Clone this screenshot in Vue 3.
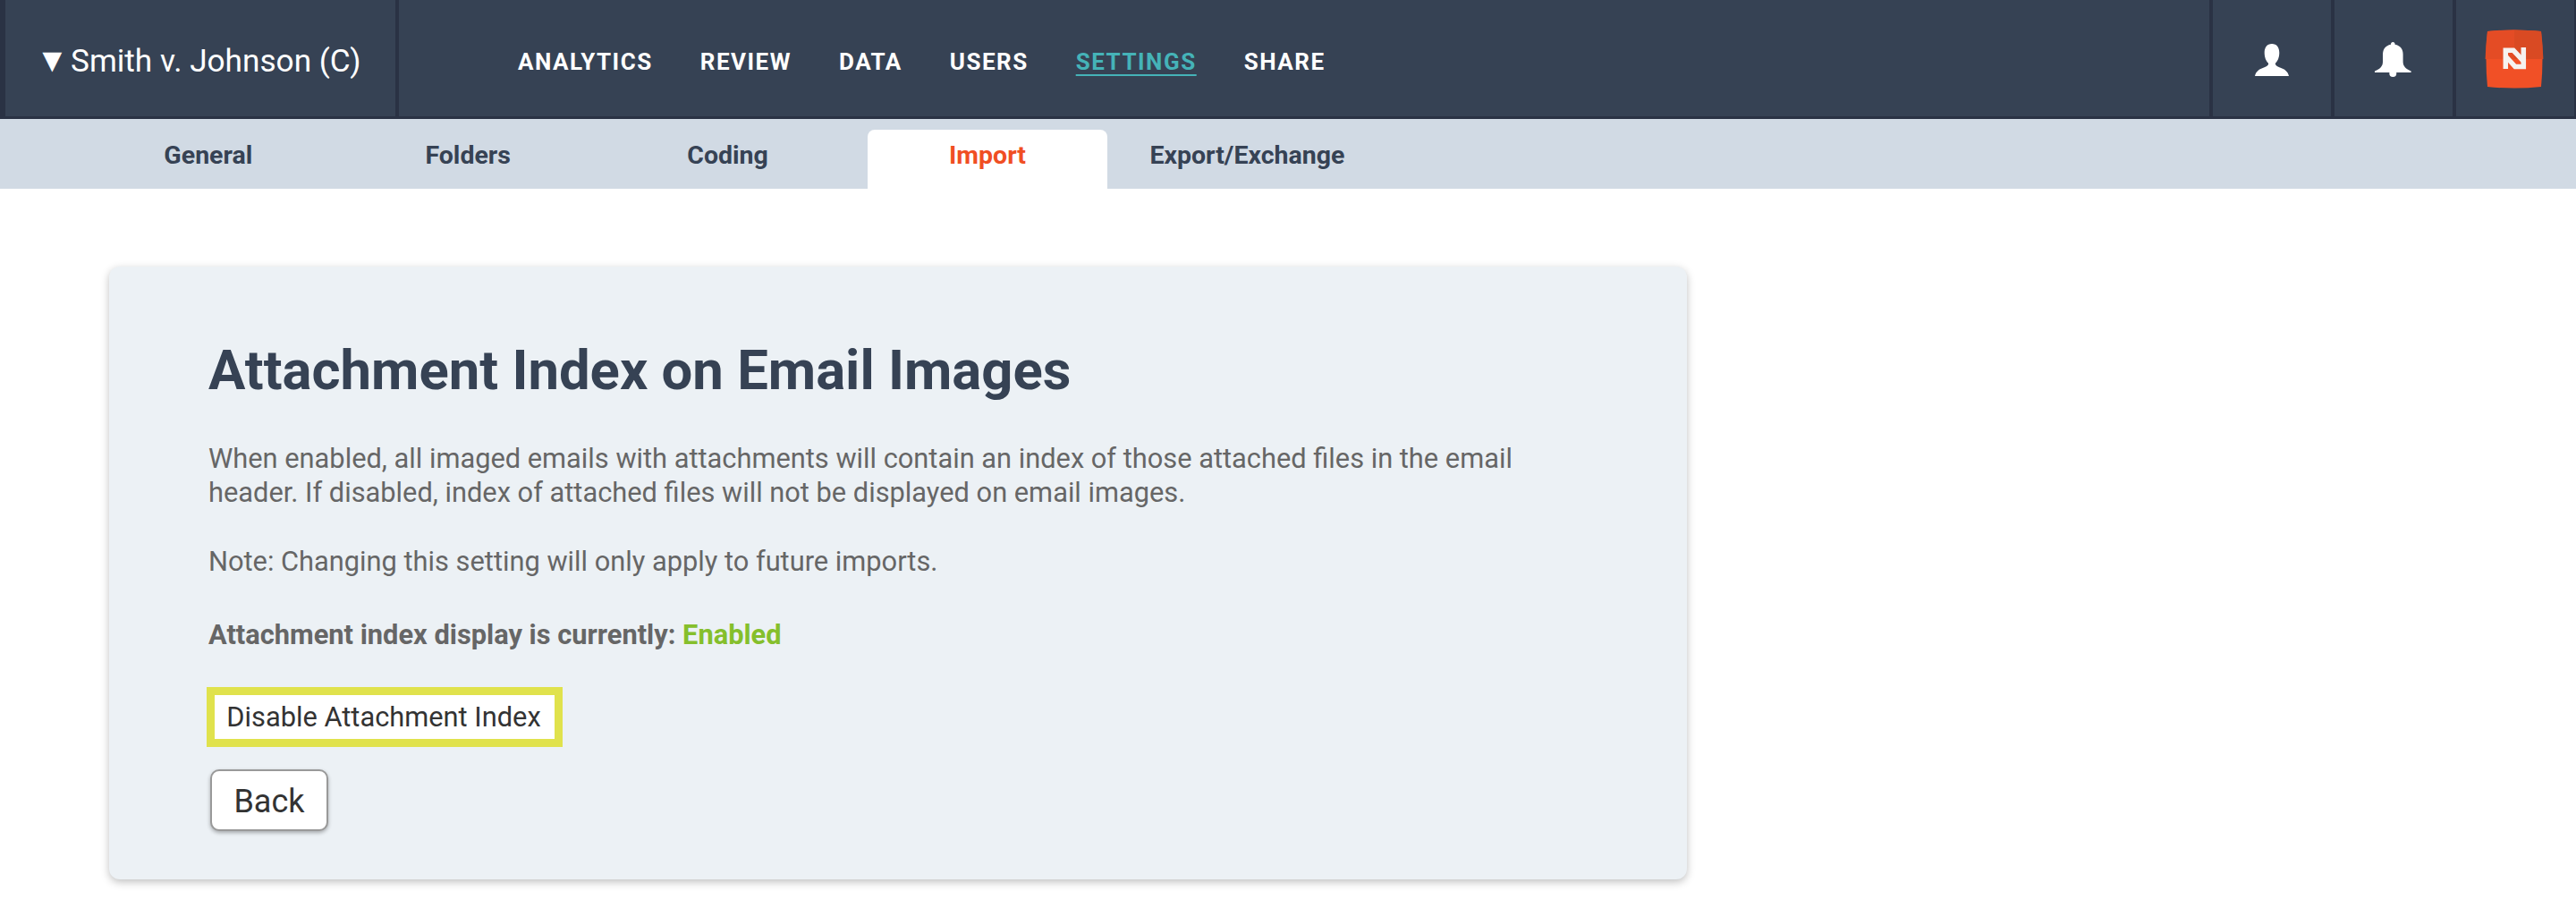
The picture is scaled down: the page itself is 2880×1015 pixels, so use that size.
<script setup>
const navItems = ['ANALYTICS', 'REVIEW', 'DATA', 'USERS', 'SETTINGS', 'SHARE']
const tabs = ['General', 'Folders', 'Coding', 'Import', 'Export/Exchange']
</script>

<template>
  <div class="page">
    <header class="topbar">
      <div class="matter"><span class="tri">▼</span>Smith v. Johnson (C)</div>
      <nav class="nav">
        <a v-for="n in navItems" :key="n" :class="{ on: n === 'SETTINGS' }">{{ n }}</a>
      </nav>
      <div class="tools">
        <div class="tool">
          <svg width="38" height="36" viewBox="0 0 38 36"><path fill="#fff" d="M19 0C13.500 0 10.700 4 10.700 10C10.700 15 12.500 19.500 15 21.500C15.500 23.500 14 25 10 26.500C5 28 1 31 0 36H38C37 31 33 28 28 26.500C24 25 22.500 23.500 23 21.500C25.500 19.500 27.300 15 27.300 10C27.300 4 24.500 0 19 0Z"/></svg>
        </div>
        <div class="tool">
          <svg class="bell" width="41" height="40" viewBox="0 0 41 40"><path fill="#fff" d="M20.300 0C18.800 0 18 1 18 2.800C12 4 9 8 9 14V22C9 27 6 30 0 32.500V34H40.600V32.500C34.600 30 31.600 27 31.600 22V14C31.600 8 28.600 4 22.600 2.800C22.600 1 21.800 0 20.300 0Z"/><circle fill="#fff" cx="20.300" cy="35" r="4"/></svg>
        </div>
        <div class="tool logo-cell">
          <svg width="66" height="66" viewBox="0 0 66 66">
            <path fill="#f15026" d="M3 2Q33 -1 63 2Q66 33 63 64Q33 67 3 64Q0 33 3 2z"/>
            <path fill="#d94a23" d="M33 .5Q50 .5 63 2Q65 17 65.400 33H33z"/>
            <path fill="#e44c25" d="M3 2Q17 .5 33 .5V33H.6Q1 17 3 2z"/>
            <path fill="none" stroke="#f6f2f0" stroke-width="5.500" d="M23.300 44V23.300H32L43 35"/>
            <path fill="none" stroke="#f6f2f0" stroke-width="5.500" d="M43.300 20V41.500H34L23.500 30"/>
          </svg>
        </div>
      </div>
    </header>
    <div class="subnav">
      <a v-for="t in tabs" :key="t" class="tab" :class="{ active: t === 'Import' }">{{ t }}</a>
    </div>
    <main class="main">
      <section class="card">
        <h1>Attachment Index on Email Images</h1>
        <p class="desc">When enabled, all imaged emails with attachments will contain an index of those attached files in the email header. If disabled, index of attached files will not be displayed on email images.</p>
        <p class="note">Note: Changing this setting will only apply to future imports.</p>
        <p class="status"><strong>Attachment index display is currently:</strong> <strong class="enabled">Enabled</strong></p>
        <button class="disable">Disable Attachment Index</button>
        <button class="back">Back</button>
      </section>
    </main>
  </div>
</template>

<style>
html, body { margin: 0; background: #fff; }
</style>

<style scoped>
.page { font-family: Roboto, "Liberation Sans", sans-serif; width: 2880px; height: 1015px; overflow: hidden; background: #fff; }
.topbar {
  height: 133px; box-sizing: border-box; background: #364254; border-bottom: 3px solid #2a3244;
  border-left: 6px solid #2a3244;
  display: flex; align-items: stretch; color: #fff;
}
.matter {
  width: 402px; padding-left: 34px; border-right: 4px solid #2a3244;
  font-size: 35.200px; line-height: 136px; height: 130px; white-space: nowrap;
}
.tri { display: inline-block; width: 39px; font-size: 37px; line-height: 1; }
.nav { flex: 1; display: flex; align-items: center; gap: 53px; padding-left: 133px; padding-top: 8px; }
.nav a { font-size: 26px; font-weight: 700; letter-spacing: 1.500px; color: #fff; }
.nav a.on { color: #45b3b8; text-decoration: underline; text-underline-offset: 5px; }
.tools { display: flex; }
.tool { width: 132px; border-left: 4px solid #2a3244; display: flex; align-items: center; justify-content: center; padding-top: 4px; box-sizing: content-box; height: 126px; }
.bell { margin-right: 1px; }
.logo-cell { border-right: 2px solid #2a3244; padding-top: 2px; padding-right: 3px; height: 128px; width: 129px; }
.subnav { height: 78px; background: #d1dae4; display: flex; align-items: flex-end; padding-left: 98.800px; gap: 22.400px; }
.tab {
  width: 268px; height: 66px; box-sizing: border-box; text-align: center; font-size: 28.500px; font-weight: 700; line-height: 58px;
  color: #364254; border-radius: 8px 8px 0 0;
}
.tab.active { background: #fff; color: #f04e23; }
.main { padding: 87px 0 0 122px; }
.card {
  width: 1764px; height: 685px; box-sizing: border-box; padding: 83px 0 0 111px; background: #ecf1f5; border-radius: 12px;
  box-shadow: 0 3px 10px rgba(0,0,0,.25);
}
h1 { margin: 0; font-size: 61.600px; font-weight: 700; line-height: 66px; color: #364254; }
p { margin: 0; font-size: 30.800px; line-height: 38.500px; color: #666; width: 1480px; }
.desc { margin-top: 46.500px; }
.note { margin-top: 38px; }
.status { margin-top: 43.500px; }
.enabled { color: #85bf2c; }
.disable {
  display: block; margin: 39px 0 0 -2px; width: 398px; height: 67px; box-sizing: border-box; border: 9px solid #e0e24c; border-radius: 0;
  background: #fff; padding: 0 2px 0 0; font: 400 30.800px Roboto, sans-serif; color: #333;
}
.back {
  display: block; margin: 25px 0 0 2px; width: 132px; height: 69px; box-sizing: border-box; border: 2px solid #999; border-radius: 10px;
  background: #fff; padding: 2px 0 0; font: 400 36px Roboto, sans-serif; color: #333; box-shadow: 0 2px 4px rgba(0,0,0,.3);
}
</style>
